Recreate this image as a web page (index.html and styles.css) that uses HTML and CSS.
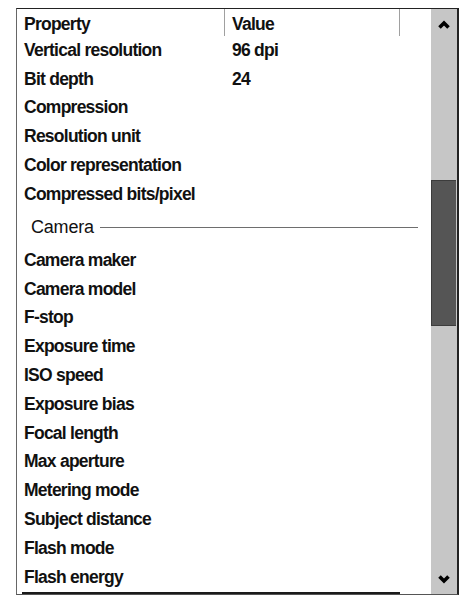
FILE: index.html
```html
<!DOCTYPE html>
<html>
<head>
<meta charset="utf-8">
<link rel="stylesheet" href="styles.css">
</head>
<body>
<div class="frame">
  <div class="list">
    <div class="header">
      <div class="col-name">Property</div>
      <div class="col-value">Value</div>
      <div class="col-rest"></div>
    </div>
    <div class="row"><div class="col-name">Vertical resolution</div><div class="col-value">96 dpi</div></div>
    <div class="row"><div class="col-name">Bit depth</div><div class="col-value">24</div></div>
    <div class="row"><div class="col-name">Compression</div></div>
    <div class="row"><div class="col-name">Resolution unit</div></div>
    <div class="row"><div class="col-name">Color representation</div></div>
    <div class="row"><div class="col-name">Compressed bits/pixel</div></div>
    <div class="group"><span class="group-label">Camera</span><span class="group-line"></span></div>
    <div class="row"><div class="col-name">Camera maker</div></div>
    <div class="row"><div class="col-name">Camera model</div></div>
    <div class="row"><div class="col-name">F-stop</div></div>
    <div class="row"><div class="col-name">Exposure time</div></div>
    <div class="row"><div class="col-name">ISO speed</div></div>
    <div class="row"><div class="col-name">Exposure bias</div></div>
    <div class="row"><div class="col-name">Focal length</div></div>
    <div class="row"><div class="col-name">Max aperture</div></div>
    <div class="row"><div class="col-name">Metering mode</div></div>
    <div class="row"><div class="col-name">Subject distance</div></div>
    <div class="row"><div class="col-name">Flash mode</div></div>
    <div class="row"><div class="col-name">Flash energy</div></div>
    <div class="cut"></div>
  </div>
  <div class="scrollbar">
    <div class="arrow">
      <svg width="12" height="9" viewBox="0 0 12 9"><polyline points="1.5,7.5 6,3 10.5,7.5" fill="none" stroke="#000" stroke-width="3.6" stroke-linejoin="miter"/></svg>
    </div>
    <div class="track"><div class="thumb"></div></div>
    <div class="arrow">
      <svg width="12" height="9" viewBox="0 0 12 9"><polyline points="1.5,1.5 6,6 10.5,1.5" fill="none" stroke="#000" stroke-width="3.6" stroke-linejoin="miter"/></svg>
    </div>
  </div>
</div>
</body>
</html>
```

FILE: styles.css
```css
html, body {
  margin: 0;
  padding: 0;
  background: #ffffff;
}

body {
  font-family: "Liberation Sans", Arial, sans-serif;
  color: #111111;
}

.frame {
  margin: 8px 0 0 16px;
  width: 440px;
  height: 585px;
  display: flex;
  border-top: 1px solid #222222;
  border-left: 1px solid #666666;
  border-bottom: 1px solid #555555;
  border-right: 2px solid #222222;
}

.list {
  flex: 1;
  display: flex;
  flex-direction: column;
  overflow: hidden;
  font-weight: bold;
  font-size: 17.5px;
  letter-spacing: -0.75px;
}

.header {
  display: flex;
  height: 27px;
  flex: none;
}

.header .col-name,
.header .col-value,
.header .col-rest {
  line-height: 30px;
  height: 27px;
}

.header .col-name {
  border-right: 1px solid #a0a0a0;
  width: 200px;
}

.header .col-value {
  border-right: 1px solid #a0a0a0;
  width: 167px;
}

.row {
  display: flex;
  height: 28.8px;
  flex: none;
  align-items: center;
}

.col-name {
  width: 201px;
  padding-left: 7px;
  white-space: nowrap;
}

.col-value {
  padding-left: 7px;
  white-space: nowrap;
}

.group {
  display: flex;
  align-items: center;
  height: 37.2px;
  flex: none;
  padding-left: 14px;
  padding-right: 13px;
  gap: 6px;
}

.group-label {
  font-weight: normal;
  font-size: 18px;
  letter-spacing: -0.2px;
  color: #111111;
}

.group-line {
  flex: 1;
  height: 1px;
  background: #6e6e6e;
  margin-top: 1px;
}

.cut {
  flex: none;
  height: 2px;
  margin-left: 5px;
  width: 378px;
  background: #1a1a1a;
}

.scrollbar {
  width: 26px;
  flex: none;
  background: #c6c6c6;
  display: flex;
  flex-direction: column;
}

.arrow {
  height: 30px;
  flex: none;
  display: flex;
  align-items: center;
  justify-content: center;
}

.track {
  flex: 1;
}

.thumb {
  margin-top: 141px;
  height: 144px;
  width: 24px;
  background: #555555;
  border: 1px solid #3c3c3c;
  border-right-width: 0;
}
```
